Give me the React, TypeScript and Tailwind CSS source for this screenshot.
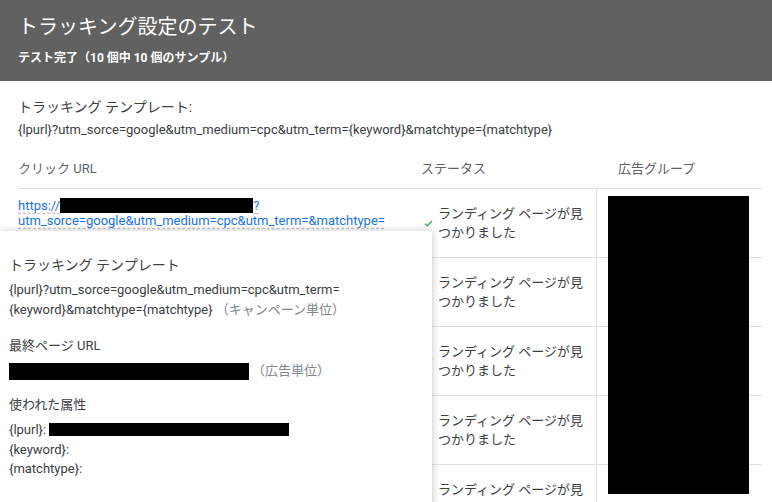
import React from 'react';

// --- Petite coche verte pour la colonne statut ---
const CheckMark = () => (
    <svg width="9" height="7" viewBox="0 0 9 7" className="shrink-0">
        <path d="M1 3.6 L3.3 5.8 L8 1" fill="none" stroke="#34a853" strokeWidth="1.3" />
    </svg>
);

const StatusCell = () => (
    <div className="flex items-center gap-[5px] pl-[17px]">
        <CheckMark />
        <span className="whitespace-nowrap text-[13px] leading-[19px] text-[#3c4043]">
            ランディング ページが見<br />つかりました
        </span>
    </div>
);

const ROW_COUNT = 5;

const App = () => {
    const font = "font-['Roboto','Noto_Sans_CJK_JP',sans-serif]";

    return (
        <div className={`relative h-[502px] w-[772px] overflow-hidden bg-white ${font}`}>
            {/* En-tête gris */}
            <div className="h-[81px] bg-[#616161] px-[18px] pt-[12px] text-white">
                <h1 className="text-[20px] leading-[30px] font-normal">トラッキング設定のテスト</h1>
                <p className="mt-[7px] text-[12px] leading-[18px] font-bold">テスト完了（10 個中 10 個のサンプル）</p>
            </div>

            {/* Contenu principal */}
            <div className="px-[18px] pt-[16px] pr-[10px]">
                <div className="text-[14px] leading-[20px] text-[#3c4043]">トラッキング テンプレート:</div>
                <div className="mt-[3px] text-[13px] leading-[20px] text-[#3c4043]">
                    {'{lpurl}?utm_sorce=google&utm_medium=cpc&utm_term={keyword}&matchtype={matchtype}'}
                </div>

                {/* Tableau */}
                <div className="mt-[10px]">
                    <div className="flex h-[39px] items-center border-b border-[#e0e0e0] text-[13px] text-[#5f6368]">
                        <div className="w-[389px]">クリック URL</div>
                        <div className="w-[190px] pl-[14px]">ステータス</div>
                        <div className="flex-1 pl-[21px]">広告グループ</div>
                    </div>

                    <div className="relative">
                        {Array.from({ length: ROW_COUNT }).map((_, i) => (
                            <div key={i} className="flex h-[69px] border-b border-[#e0e0e0]">
                                <div className="w-[389px] pt-[9px] text-[13px] leading-[15px] text-[#1a73e8]">
                                    {i === 0 && (
                                        <>
                                            <span className="underline decoration-dashed decoration-[#c6c6c6] underline-offset-[3px]">
                                                https://<span className="inline-block h-[15px] w-[193px] bg-black align-top" />?
                                            </span>
                                            <br />
                                            <span className="underline decoration-dashed decoration-[#c6c6c6] underline-offset-[3px]">
                                                utm_sorce=google&amp;utm_medium=cpc&amp;utm_term=&amp;matchtype=
                                            </span>
                                        </>
                                    )}
                                </div>
                                <div className="flex w-[190px] items-center border-r border-[#e0e0e0]">
                                    <StatusCell />
                                </div>
                                <div className="flex-1" />
                            </div>
                        ))}
                        {/* Zone masquée (groupe d'annonces) */}
                        <div className="absolute left-[590px] top-[7px] h-[298px] w-[141px] bg-black" />
                    </div>
                </div>
            </div>

            {/* Infobulle de détail */}
            <div className="absolute left-0 top-[231px] h-[300px] w-[432px] bg-white px-[9px] pt-[24px] text-[#3c4043] shadow-[0_1px_8px_rgba(0,0,0,0.25)]">
                <div className="text-[14px] leading-[20px]">トラッキング テンプレート</div>
                <div className="mt-[5px] text-[13px] leading-[20px]">
                    {'{lpurl}?utm_sorce=google&utm_medium=cpc&utm_term='}
                    <br />
                    {'{keyword}&matchtype={matchtype}'}
                    <span className="ml-[3px] text-[#80868b]">（キャンペーン単位）</span>
                </div>

                <div className="mt-[16px] text-[13px] leading-[20px]">最終ページ URL</div>
                <div className="mt-[5px] flex h-[20px] items-center text-[13px]">
                    <span className="inline-block h-[17px] w-[240px] bg-black" />
                    <span className="ml-[3px] text-[#80868b]">（広告単位）</span>
                </div>

                <div className="mt-[14px] text-[13px] leading-[20px]">使われた属性</div>
                <div className="mt-[5px] text-[13px] leading-[19.5px]">
                    <div className="flex items-center">
                        {'{lpurl}:'}
                        <span className="ml-[3px] inline-block h-[13px] w-[240px] bg-black" />
                    </div>
                    <div>{'{keyword}:'}</div>
                    <div>{'{matchtype}:'}</div>
                </div>
            </div>
        </div>
    );
};

export default App;
